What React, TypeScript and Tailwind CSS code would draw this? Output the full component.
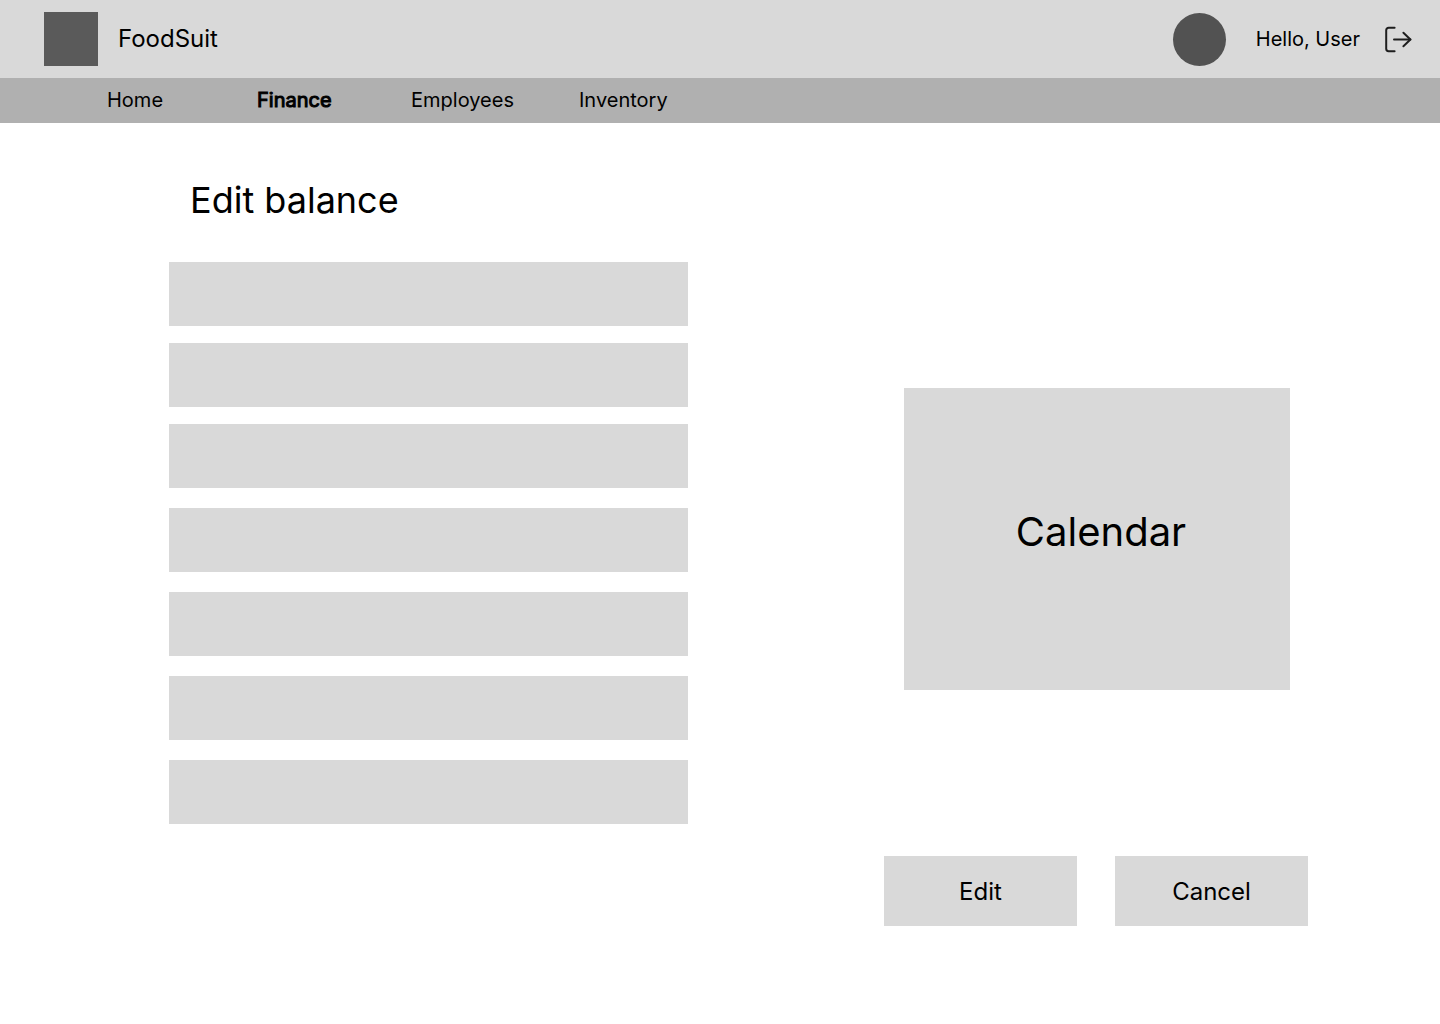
import React from 'react';

const navItems = [
  { label: 'Home', href: '#home' },
  { label: 'Finance', href: '#finance', active: true },
  { label: 'Employees', href: '#employees' },
  { label: 'Inventory', href: '#inventory' },
];

function LogoutIcon() {
  return (
    <svg
      viewBox="0 0 28 28"
      className="size-7"
      fill="none"
      stroke="#1e1e1e"
      strokeWidth="2"
      strokeLinecap="round"
      strokeLinejoin="round"
      aria-hidden="true"
    >
      <path d="M10.6 2.8H4.6a2.4 2.4 0 0 0-2.4 2.4v18.6a2.4 2.4 0 0 0 2.4 2.4h6" />
      <path d="M10 14.5h16.4" />
      <path d="M19.4 7.8l7 6.7-7 6.7" />
    </svg>
  );
}

function Header() {
  return (
    <header>
      <div className="flex items-center bg-[#d9d9d9] py-3 pl-11 pr-7">
        <div className="size-[54px] bg-[#5a5a5a]" />
        <span className="ml-5 text-2xl">FoodSuit</span>
        <div className="ml-auto size-[53px] self-end rounded-full bg-[#525252]" />
        <span className="ml-[30px] text-xl">Hello, User</span>
        <button type="button" aria-label="Log out" className="ml-6">
          <LogoutIcon />
        </button>
      </div>
      <nav className="grid h-[45px] grid-cols-[150px_154px_168px_auto] items-center bg-[#b0b0b0] pb-0.5 pl-[107px] text-xl">
        {navItems.map((item) => (
          <a
            key={item.label}
            href={item.href}
            aria-current={item.active ? 'page' : undefined}
            className={item.active ? '[-webkit-text-stroke:1px_black]' : ''}
          >
            {item.label}
          </a>
        ))}
      </nav>
    </header>
  );
}

function Field({ number }: { number: number }) {
  return (
    <input
      type="text"
      aria-label={`Balance field ${number}`}
      className="h-16 w-full bg-[#d9d9d9] px-5 text-2xl"
    />
  );
}

export default function App() {
  return (
    <div className="min-h-screen bg-white font-['Inter',sans-serif] text-black">
      <Header />
      <form className="flex justify-between gap-12 pb-16 pl-[169px] pr-[132px] pt-[55px]">
        <section className="max-w-[519px] flex-1">
          <h1 className="pl-[21px] text-4xl leading-[44px]">Edit balance</h1>
          <div className="mt-10 flex flex-col gap-[17px]">
            {[1, 2, 3].map((n) => (
              <Field key={n} number={n} />
            ))}
          </div>
          <div className="mt-5 flex flex-col gap-5">
            {[4, 5, 6, 7].map((n) => (
              <Field key={n} number={n} />
            ))}
          </div>
        </section>
        <section className="w-[424px] pt-[210px]">
          <div className="ml-5 flex h-[302px] w-[386px] items-center justify-center bg-[#d9d9d9] pb-3.5 pl-2 text-[40px] leading-[48px]">
            Calendar
          </div>
          <div className="mt-[166px] grid grid-cols-2 gap-[38px] text-2xl">
            <button type="button" className="h-[70px] bg-[#d9d9d9] pt-0.5">
              Edit
            </button>
            <button type="button" className="h-[70px] bg-[#d9d9d9] pt-0.5">
              Cancel
            </button>
          </div>
        </section>
      </form>
    </div>
  );
}
